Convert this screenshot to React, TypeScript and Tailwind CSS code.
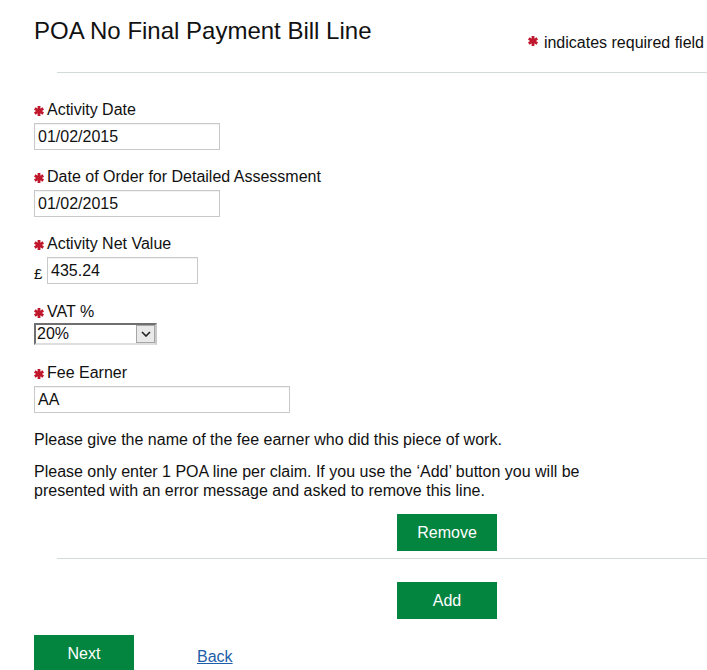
import React from "react";

const FONT = { fontFamily: '"Liberation Sans", Arial, sans-serif' };

function Star({ className = "" }: { className?: string }) {
  return (
    <svg viewBox="0 0 10 10" className={`w-[10px] h-[10px] ${className}`}>
      <g stroke="#c0182d" strokeWidth="2.8" strokeLinecap="butt">
        <line x1="5" y1="0" x2="5" y2="10" />
        <line x1="0.7" y1="2.5" x2="9.3" y2="7.5" />
        <line x1="0.7" y1="7.5" x2="9.3" y2="2.5" />
      </g>
    </svg>
  );
}

function Label({ text, className = "" }: { text: string; className?: string }) {
  return (
    <div className={`flex items-center text-[16px] leading-[19px] text-[#111] ${className}`}>
      <Star className="mr-[3px] mt-[2px]" />
      <span>{text}</span>
    </div>
  );
}

function TextBox({ value, width }: { value: string; width: string }) {
  return (
    <div
      className={`${width} h-[27px] border border-[#c9c9c9] shadow-[inset_0_1px_1px_rgba(0,0,0,0.06)] flex items-center pl-[3px] text-[16px] text-[#111]`}
    >
      {value}
    </div>
  );
}

function GreenButton({ label, className = "" }: { label: string; className?: string }) {
  return (
    <button
      className={`w-[100px] h-[37px] bg-[#03843f] text-white text-[16px] flex items-center justify-center ${className}`}
    >
      {label}
    </button>
  );
}

export default function App() {
  return (
    <div style={FONT} className="w-[707px] h-[670px] bg-white overflow-hidden text-[#111]">
      <div className="pl-[34px] pt-[17px]">
        {/* heading */}
        <div className="flex items-start justify-between pr-[3px]">
          <h1 className="text-[24px] leading-[28px] font-normal">POA No Final Payment Bill Line</h1>
          <div className="mt-[16px] flex items-center text-[16px] leading-[19px]">
            <Star className="mr-[6px] -mt-[4px]" />
            indicates required field
          </div>
        </div>
        <div className="ml-[23px] mt-[20px] h-px bg-[#d3dada]" />

        {/* fields */}
        <Label text="Activity Date" className="mt-[27px]" />
        <div className="mt-[4px]">
          <TextBox value="01/02/2015" width="w-[186px]" />
        </div>

        <Label text="Date of Order for Detailed Assessment" className="mt-[17px]" />
        <div className="mt-[4px]">
          <TextBox value="01/02/2015" width="w-[186px]" />
        </div>

        <Label text="Activity Net Value" className="mt-[17px]" />
        <div className="mt-[4px] flex items-end">
          <span className="w-[13px] text-[15px] leading-[19px] mb-[1px]">£</span>
          <TextBox value="435.24" width="w-[151px]" />
        </div>

        <Label text="VAT %" className="mt-[18px]" />
        <div className="mt-[2px] w-[123px] h-[22px] border-2 border-t-[#6f6f6f] border-l-[#6f6f6f] border-r-[#c8c8c8] border-b-[#dedede] flex items-center justify-between text-[16px] leading-[18px]">
          <span className="pl-px">20%</span>
          <span className="w-[19px] h-[18px] bg-[#e9e9e9] border border-[#a6a6a6] flex items-center justify-center">
            <svg viewBox="0 0 10 6" className="w-[10px] h-[6px]">
              <path d="M1 1 L5 5 L9 1" fill="none" stroke="#222" strokeWidth="1.6" />
            </svg>
          </span>
        </div>

        <Label text="Fee Earner" className="mt-[18px]" />
        <div className="mt-[4px]">
          <TextBox value="AA" width="w-[256px]" />
        </div>

        <p className="mt-[17px] text-[16px] leading-[19px]">
          Please give the name of the fee earner who did this piece of work.
        </p>
        <p className="mt-[13px] w-[580px] text-[16px] leading-[19px]">
          Please only enter 1 POA line per claim. If you use the ‘Add’ button you will be presented with
          an error message and asked to remove this line.
        </p>

        <GreenButton label="Remove" className="mt-[14px] ml-[363px]" />
        <div className="ml-[23px] mt-[7px] h-px bg-[#d3dada]" />
        <GreenButton label="Add" className="mt-[23px] ml-[363px]" />

        <div className="mt-[16px] flex items-center">
          <GreenButton label="Next" />
          <a href="#" className="ml-[63px] mt-[6px] text-[16px] text-[#1d5ea8] underline">
            Back
          </a>
        </div>
      </div>
    </div>
  );
}
